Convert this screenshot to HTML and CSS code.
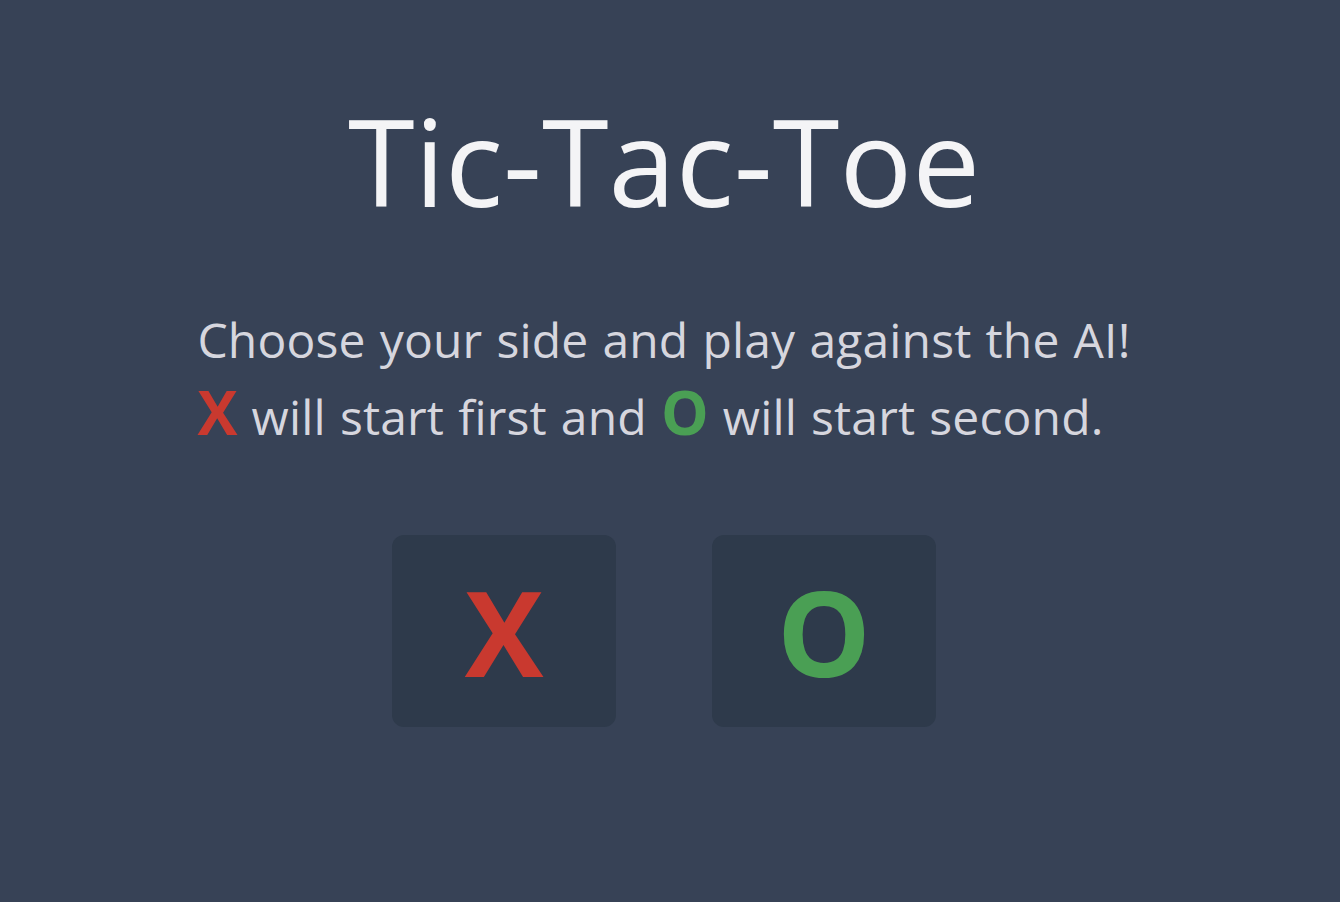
FILE: index.html
```html
<!DOCTYPE html>
<html lang="en">
<head>
<meta charset="utf-8">
<title>Tic-Tac-Toe</title>
<link rel="stylesheet" href="styles.css">
</head>
<body>
<main class="app">
  <h1 class="title">Tic-Tac-Toe</h1>
  <p class="intro">Choose your side and play against the AI!<br><span class="mark mark-x">X</span> will start first and <span class="mark mark-o">O</span> will start second.</p>
  <div class="choices">
    <button class="choice choice-x" type="button">X</button>
    <button class="choice choice-o" type="button">O</button>
  </div>
</main>
</body>
</html>
```

FILE: styles.css
```css
html, body {
  margin: 0;
  padding: 0;
  height: 100%;
}
body {
  background: #374256;
  font-family: "Open Sans", "Noto Sans", sans-serif;
  color: #f4f4f6;
}
.app {
  display: flex;
  flex-direction: column;
  align-items: center;
  padding: 88px 12px 0 0;
}
.title {
  margin: 0;
  font-size: 121px;
  font-weight: 400;
  line-height: 1.2;
  color: #f4f4f6;
}
.intro {
  margin: 68px 0 0;
  width: fit-content;
  text-align: left;
  font-size: 48px;
  line-height: 77px;
  letter-spacing: 0.15px;
  word-spacing: 1.5px;
  color: #d6d6de;
}
.mark {
  font-weight: 700;
  font-size: 1.25em;
  line-height: 1;
  letter-spacing: 0;
}
.mark-x { color: #c9392f; }
.mark-o { color: #4a9f54; }
.choices {
  display: flex;
  gap: 96px;
  margin-top: 80px;
}
.choice {
  width: 224px;
  height: 192px;
  border: none;
  border-radius: 12px;
  background: #2e3a4b;
  font-family: inherit;
  font-weight: 700;
  font-size: 118px;
  line-height: 1;
  padding: 2px 0 0;
  cursor: pointer;
}
.choice-x { color: #c9392f; }
.choice-o { color: #4a9f54; }
```
